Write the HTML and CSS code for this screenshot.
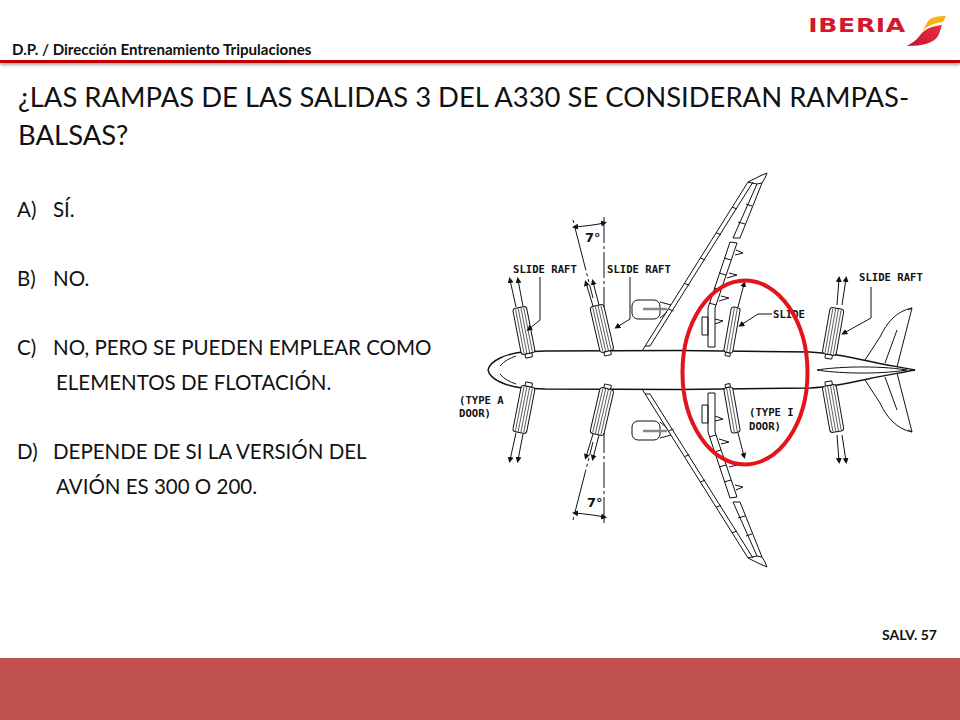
FILE: index.html
```html
<!DOCTYPE html>
<html>
<head>
  <link rel="stylesheet" href="styles.css">
</head>
<body>
  <div class="slide">
    <div class="header">
      <div class="dept">D.P. / Dirección Entrenamiento Tripulaciones</div>
      <div class="logo">
        <span class="logo-text">IBERIA</span>
        <svg class="logo-mark" width="40" height="34" viewBox="906 14 40 34">
          <defs>
            <linearGradient id="wingRed" x1="0" y1="1" x2="1" y2="0">
              <stop offset="0" stop-color="#c8102e"/>
              <stop offset="1" stop-color="#e8323c"/>
            </linearGradient>
          </defs>
          <path fill="#f7b512" d="M946,16 C938,16 931,17 928,21 L922,32 C926,26 934,23 943,22 Z"/>
          <path fill="url(#wingRed)" d="M942,25 C932,26 925,29 921,34 C917,40 912,43 907,46 C922,46 934,43 938,36 C940,32 941,28 942,25 Z"/>
        </svg>
      </div>
    </div>

    <div class="main">
      <h1 class="question">¿LAS RAMPAS DE LAS SALIDAS 3 DEL A330 SE CONSIDERAN RAMPAS-BALSAS?</h1>
      <div class="content">
        <div class="options">
          <div class="option"><span class="mark">A)</span><div>SÍ.</div></div>
          <div class="option"><span class="mark">B)</span><div>NO.</div></div>
          <div class="option"><span class="mark">C)</span><div>NO, PERO SE PUEDEN EMPLEAR COMO<span class="cont">ELEMENTOS DE FLOTACIÓN.</span></div></div>
          <div class="option"><span class="mark">D)</span><div>DEPENDE DE SI LA VERSIÓN DEL<span class="cont">AVIÓN ES 300 O 200.</span></div></div>
        </div>

        <svg class="diagram" width="480" height="420" viewBox="450 160 480 420">
          <defs>
            <g id="raft">
              <rect x="-7" y="-24" width="14" height="47" rx="3"/>
              <path class="rib" d="M-4.2,-23 V22 M-1.4,-24 V23 M1.4,-24 V23 M4.2,-23 V22"/>
              <rect x="-3.5" y="23" width="7" height="4" rx="1"/>
            </g>
            <g id="narrow">
              <rect x="-4.5" y="-23" width="9" height="46" rx="2.5"/>
              <path class="rib" d="M-1.5,-23 V23 M1.5,-23 V23"/>
              <rect x="-2.5" y="23" width="5" height="3.5" rx="1"/>
            </g>
            <g id="half">
              <!-- fuselage -->
              <path class="heavy" d="M488,370 C490,360 507,354 522,352 L545,351 L680,350.5 L810,352 C830,353 850,357 868,361 C885,365 900,367 915,370"/>
              <path d="M500,366 C504,361 510,358 516,356"/>
              <path d="M817,370 C835,367 875,365 907,370"/>

              <!-- wing -->
              <path d="M642,351 L748,182 L760,176 L767,173 L765,178 L762,183 L757,184 L752,183 L748,182"/>
              <path d="M645,346 L650,346 L753,182"/>
              <path d="M668.5,309 L673.5,311 M684.4,283.4 L689.4,285.4 M700.3,258 L705.3,260 M716,232.7 L721,234.7 M732,207 L737,209"/>
              <path d="M708,347 L708,308 L730,242 L737,243 L715,308 L715,347 Z"/>
              <path d="M733,238 L757,184 M740,238 L762,183 M733,238 L740,238"/>
              <path d="M709,303 L716,305 M714,288 L721,290 M719,273 L726,275 M724,258 L731,260 M738,222 L745,224 M746,204 L752,206"/>
              <path d="M736,250 L743,253 L735,255 M729,273 L737,275 L727,278 M721,296 L729,298 L719,301 M715,319 L723,321 L715,324"/>
              <path d="M702,317 H708 V335 H702 Z"/>

              <!-- engine -->
              <rect x="632" y="300" width="28" height="19" rx="6"/>
              <path d="M660,302 L671,305 M660,318 L667,312"/>
              <path class="grey" d="M643,309 H667"/>

              <!-- tailplane -->
              <path d="M865,360 L880,337 C887,322 897,311 912,308 L897,367"/>
              <path d="M912,308 L908,310 M885,363 L897,330"/>

              <!-- slides -->
              <use href="#raft" transform="translate(524 331) rotate(-11)"/>
              <use href="#raft" transform="translate(602 329) rotate(-13)"/>
              <use href="#narrow" transform="translate(732 330) rotate(10)"/>
              <use href="#raft" transform="translate(833 332) rotate(10)"/>

              <!-- escape arrows -->
              <path marker-end="url(#tip)" d="M516,307 L510,280"/>
              <path marker-end="url(#tip)" d="M523,306 L518,280"/>
              <path marker-end="url(#tip)" d="M593,306 L586,283"/>
              <path marker-end="url(#tip)" d="M599,305 L593,282"/>
              <path marker-end="url(#tip)" d="M738,307 L744,284"/>
              <path marker-end="url(#tip)" d="M837,305 L839,279"/>
              <path marker-end="url(#tip)" d="M842,305 L846,279"/>

              <!-- 7 degree dimension -->
              <path stroke-dasharray="26 3 3 3" d="M604,217 V307"/>
              <path stroke-dasharray="3 3 46 3 3 3" d="M573,220 L593,298"/>
              <path marker-start="url(#tip2)" marker-end="url(#tip2)" d="M575,227 C585,226 595,225 604,223"/>
            </g>
            <marker id="tip" markerWidth="7" markerHeight="7" refX="3" refY="3" orient="auto" markerUnits="userSpaceOnUse">
              <path class="solid" d="M0,0 L6,3 L0,6 Z"/>
            </marker>
            <marker id="tip2" markerWidth="7" markerHeight="7" refX="3" refY="3" orient="auto-start-reverse" markerUnits="userSpaceOnUse">
              <path class="solid" d="M0,0 L6,3 L0,6 Z"/>
            </marker>
          </defs>

          <use href="#half"/>
          <use href="#half" transform="matrix(1 0 0 -1 0 740)"/>

          <!-- leaders -->
          <path marker-end="url(#tip)" d="M540,277 V320 L529,329"/>
          <path marker-end="url(#tip)" d="M630,277 V319 L617,327"/>
          <path marker-end="url(#tip)" d="M772,314 H758 L741,325"/>
          <path marker-end="url(#tip)" d="M871,287 V318 L844,333"/>

          <text class="label" x="513" y="273">SLIDE RAFT</text>
          <text class="label" x="607" y="273">SLIDE RAFT</text>
          <text class="label" x="859" y="281">SLIDE RAFT</text>
          <text class="label" x="773" y="318">SLIDE</text>
          <text class="label" x="459" y="404">(TYPE A</text>
          <text class="label" x="459" y="417">DOOR)</text>
          <text class="label" x="749" y="416">(TYPE I</text>
          <text class="label" x="749" y="430">DOOR)</text>
          <text class="angle" x="585" y="242">7°</text>
          <text class="angle" x="587" y="507">7°</text>

          <ellipse class="ring" cx="745" cy="372.5" rx="62.5" ry="92"/>
        </svg>
      </div>
      <div class="page-no">SALV. 57</div>
    </div>

    <div class="footer"></div>
  </div>
</body>
</html>
```

FILE: styles.css
```css
/* Base Layout */
body {
  margin: 0;
  background: #fff;
  font-family: "Lato", "Liberation Sans", sans-serif;
  color: #111;
}

.slide {
  width: 960px;
  height: 720px;
  display: flex;
  flex-direction: column;
  overflow: hidden;
}

/* Header */
.header {
  height: 60px;
  flex: none;
  display: flex;
  justify-content: space-between;
  align-items: flex-end;
  padding: 0 14px 0 12px;
  border-bottom: 3px solid #c00000;
  box-shadow: 0 2px 3px rgba(0, 0, 0, 0.35);
}

.dept {
  font-size: 15.1px;
  font-weight: 700;
  line-height: 16px;
  padding-bottom: 3px;
}

.logo {
  display: flex;
  align-items: flex-start;
  align-self: flex-start;
  height: 46px;
  padding-top: 14px;
}

.logo-text {
  font-family: "DejaVu Sans", sans-serif;
  font-weight: 700;
  font-size: 19px;
  line-height: 22px;
  letter-spacing: 0.5px;
  color: #d4182c;
  transform: scaleX(1.32);
  transform-origin: right center;
}

.logo-mark {
  display: block;
}

/* Question */
.main {
  flex: 1;
  display: flex;
  flex-direction: column;
  min-height: 0;
}

.question {
  margin: 0;
  padding: 15px 40px 0 18px;
  height: 80px;
  box-sizing: border-box;
  font-size: 27.45px;
  font-weight: 400;
  line-height: 38px;
}

.content {
  display: flex;
  margin-top: 17px;
  height: 420px;
}

/* Options */
.options {
  width: 450px;
  flex: none;
  display: flex;
  flex-direction: column;
  gap: 34px;
  padding: 32px 0 0 17px;
  box-sizing: border-box;
  font-size: 20.5px;
  line-height: 35px;
}

.option {
  display: flex;
}

.mark {
  width: 36px;
  flex: none;
}

.cont {
  display: block;
  margin-left: 3px;
}

/* Diagram */
.diagram {
  display: block;
  flex: none;
}

.diagram path,
.diagram rect {
  fill: none;
  stroke: #111;
  stroke-width: 1;
}

.diagram rect {
  fill: #fff;
}

.diagram .rib {
  stroke: #444;
  stroke-width: 0.8;
}

.diagram .heavy {
  stroke-width: 1.4;
}

.diagram .grey {
  stroke: #888;
  stroke-width: 2.5;
}

.diagram .solid {
  fill: #111;
  stroke: none;
}

.label {
  font-family: "DejaVu Sans Mono", monospace;
  font-size: 10.6px;
  font-weight: 700;
  fill: #111;
}

.angle {
  font-family: "DejaVu Sans", sans-serif;
  font-size: 13px;
  font-weight: 700;
  fill: #111;
}

.ring {
  fill: none;
  stroke: #e3141c;
  stroke-width: 4;
}

/* Footer */
.page-no {
  align-self: flex-end;
  margin: 47px 23px 0 0;
  font-size: 14px;
  font-weight: 700;
  line-height: 16px;
}

.footer {
  height: 62px;
  flex: none;
  background: #c0504d;
}
```
